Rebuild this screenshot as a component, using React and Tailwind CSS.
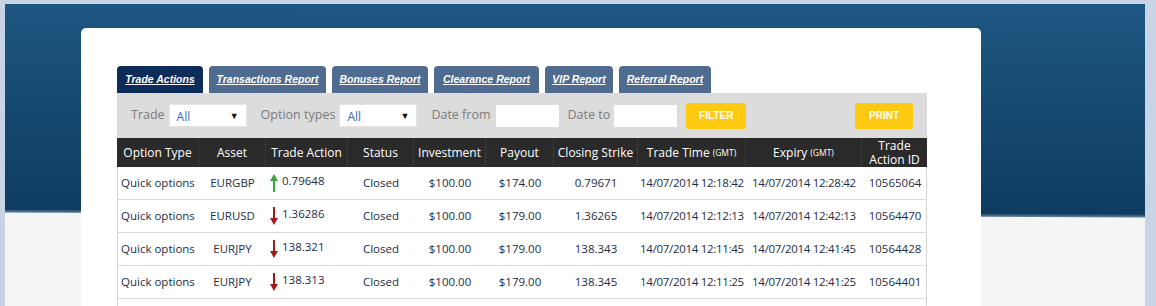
import React from 'react'

const tabs = [
  { label: 'Trade Actions', w: 'w-[86px]', active: true },
  { label: 'Transactions Report', w: 'w-[117px]' },
  { label: 'Bonuses Report', w: 'w-[96px]' },
  { label: 'Clearance Report', w: 'w-[105px]' },
  { label: 'VIP Report', w: 'w-[68px]' },
  { label: 'Referral Report', w: 'w-[92px]' },
]

const rows = [
  { type: 'Quick options', asset: 'EURGBP', dir: 'up', rate: '0.79648', status: 'Closed', inv: '$100.00', pay: '$174.00', close: '0.79671', time: '14/07/2014 12:18:42', exp: '14/07/2014 12:28:42', id: '10565064' },
  { type: 'Quick options', asset: 'EURUSD', dir: 'down', rate: '1.36286', status: 'Closed', inv: '$100.00', pay: '$179.00', close: '1.36265', time: '14/07/2014 12:12:13', exp: '14/07/2014 12:42:13', id: '10564470' },
  { type: 'Quick options', asset: 'EURJPY', dir: 'down', rate: '138.321', status: 'Closed', inv: '$100.00', pay: '$179.00', close: '138.343', time: '14/07/2014 12:11:45', exp: '14/07/2014 12:41:45', id: '10564428' },
  { type: 'Quick options', asset: 'EURJPY', dir: 'down', rate: '138.313', status: 'Closed', inv: '$100.00', pay: '$179.00', close: '138.345', time: '14/07/2014 12:11:25', exp: '14/07/2014 12:41:25', id: '10564401' },
  { type: 'Quick options', asset: 'EURUSD', dir: 'up', rate: '1.36290', status: 'Closed', inv: '$100.00', pay: '$0.00', close: '1.36281', time: '14/07/2014 12:10:02', exp: '14/07/2014 12:40:02', id: '10564388' },
]

const cols = 'grid grid-cols-[81px_67px_82px_66px_72px_68px_84px_108px_116px_66px]'

function Arrow({ dir }) {
  if (dir === 'up') {
    return (
      <svg width="8" height="18" viewBox="0 0 8 18" className="shrink-0">
        <polygon points="4,0 8,7 5,7 5,18 3,18 3,7 0,7" fill="#3aa33c" />
      </svg>
    )
  }
  return (
    <svg width="8" height="18" viewBox="0 0 8 18" className="shrink-0">
      <polygon points="3,0 5,0 5,11 8,11 4,18 0,11 3,11" fill="#a3191b" />
    </svg>
  )
}

function Select() {
  return (
    <div className="flex items-center justify-between w-[78px] h-[23px] bg-white border border-[#e4e4e4] pl-[7px] pr-[7px]">
      <span className="text-[12px] text-[#3768c4] pt-[3px]">All</span>
      <span className="text-[9px] text-[#111]">▼</span>
    </div>
  )
}

function YellowButton({ children, w }) {
  return (
    <button className={`${w} h-[26px] bg-[#fdc911] rounded-[2px] text-white text-[10px] font-bold font-['Liberation_Sans',sans-serif]`}>
      {children}
    </button>
  )
}

function HeadCell({ children, first }) {
  return (
    <div className={`flex items-center justify-center text-center leading-[14px] whitespace-nowrap ${first ? '' : 'border-l border-dotted border-[#4a4a4a]'}`}>
      {children}
    </div>
  )
}

export default function App() {
  return (
    <div className="h-[306px] w-full overflow-hidden bg-[#c8d4e6] pt-[4px] pl-[5px] pr-[11px] font-['Open_Sans',sans-serif]">
      <div className="h-full bg-[linear-gradient(180.25deg,#1d5783_0px,#0e3c61_210px,#5d7c97_213px,#f5f5f5_214px)] pt-[24px] pl-[76px]">
        <div className="w-[900px] h-full bg-white rounded-t-[5px] pt-[38px] pl-[36px]">
          <div className="w-[810px]">
            <div className="flex items-end gap-[6px] h-[27px]">
              {tabs.map((t) => (
                <div
                  key={t.label}
                  className={`${t.w} h-[27px] rounded-t-[4px] flex items-center justify-center ${t.active ? 'bg-[#0e2c59]' : 'bg-[#4f6b8f]'}`}
                >
                  <span className="text-white text-[10.5px] font-bold italic underline font-['Liberation_Sans',sans-serif]">{t.label}</span>
                </div>
              ))}
            </div>

            <div className="flex items-center h-[45px] bg-[#dcdcdc] pl-[14px] pr-[14px] text-[12.5px] text-[#7b7b7b]">
              <span>Trade</span>
              <div className="ml-[4px]"><Select /></div>
              <span className="ml-[14px]">Option types</span>
              <div className="ml-[4px]"><Select /></div>
              <span className="ml-[14px]">Date from</span>
              <div className="ml-[5px] w-[63px] h-[22px] bg-white" />
              <span className="ml-[9px]">Date to</span>
              <div className="ml-[4px] w-[63px] h-[22px] bg-white" />
              <div className="ml-[9px]"><YellowButton w="w-[60px]">FILTER</YellowButton></div>
              <div className="ml-auto"><YellowButton w="w-[58px]">PRINT</YellowButton></div>
            </div>

            <div className={`${cols} h-[29px] bg-[#2a2a2a] text-white text-[12px]`}>
              <HeadCell first>Option Type</HeadCell>
              <HeadCell>Asset</HeadCell>
              <HeadCell>Trade Action</HeadCell>
              <HeadCell>Status</HeadCell>
              <HeadCell>Investment</HeadCell>
              <HeadCell>Payout</HeadCell>
              <HeadCell>Closing Strike</HeadCell>
              <HeadCell>Trade Time <span className="text-[8.5px] ml-[3px]">(GMT)</span></HeadCell>
              <HeadCell>Expiry <span className="text-[8.5px] ml-[3px]">(GMT)</span></HeadCell>
              <HeadCell>Trade<br />Action ID</HeadCell>
            </div>

            <div className="border-l border-r border-[#d4d4d4] text-[11.5px] text-[#1e2c44]">
              {rows.map((r, i) => (
                <div key={i} className={`${cols} h-[33px] items-center border-b border-[#dadada] bg-white whitespace-nowrap`}>
                  <div className="pl-[3px]">{r.type}</div>
                  <div className="text-center">{r.asset}</div>
                  <div className="flex items-center gap-[4px] pl-[4px]">
                    <Arrow dir={r.dir} />
                    <span className="-mt-[5px]">{r.rate}</span>
                  </div>
                  <div className="text-center">{r.status}</div>
                  <div className="text-center">{r.inv}</div>
                  <div className="text-center">{r.pay}</div>
                  <div className="text-center">{r.close}</div>
                  <div className="text-center tracking-[-0.3px]">{r.time}</div>
                  <div className="text-center tracking-[-0.3px]">{r.exp}</div>
                  <div className="text-center">{r.id}</div>
                </div>
              ))}
            </div>
          </div>
        </div>
      </div>
    </div>
  )
}
